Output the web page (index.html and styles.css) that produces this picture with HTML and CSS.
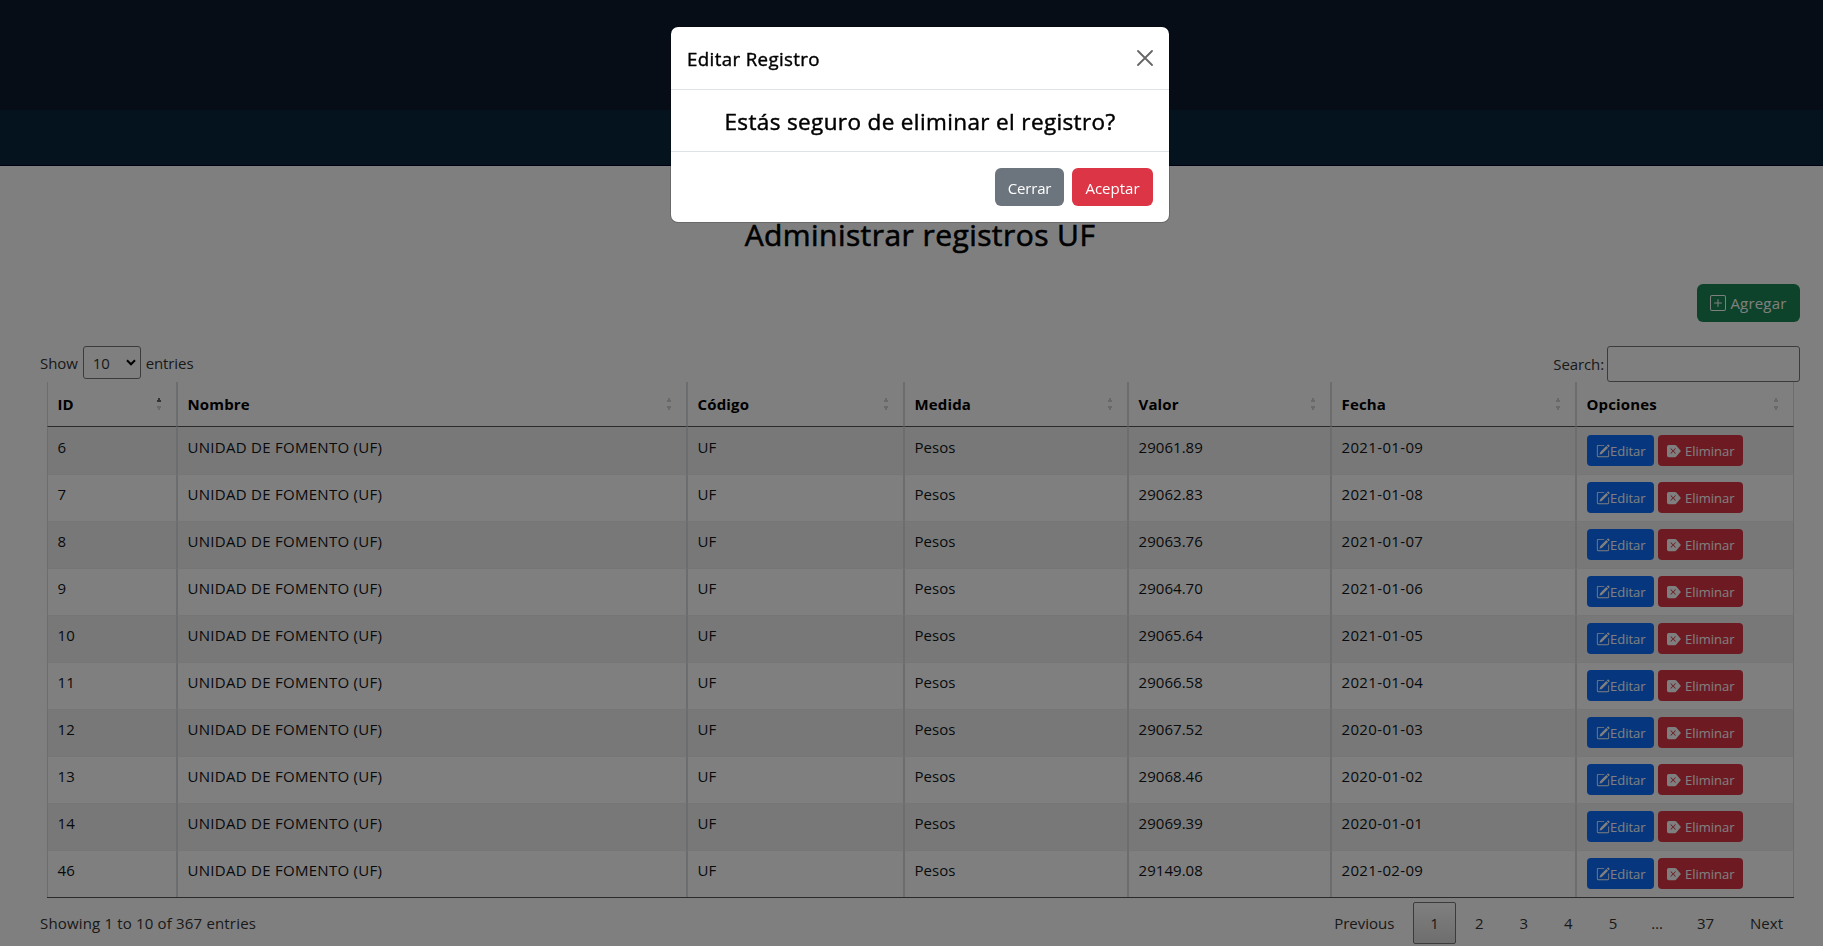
FILE: index.html
```
<!DOCTYPE html>
<html lang="es">
<head>
<meta charset="utf-8">
<title>Administrar registros UF</title>
<link rel="stylesheet" href="styles.css">
</head>
<body>
<svg class="sprite" width="0" height="0">
  <symbol id="pencil" viewBox="0 0 16 16"><path d="M15.502 1.94a.5.5 0 0 1 0 .706L14.459 3.69l-2-2L13.502.646a.5.5 0 0 1 .707 0l1.293 1.293zm-1.75 2.456-2-2L4.939 9.21a.5.5 0 0 0-.121.196l-.805 2.414a.25.25 0 0 0 .316.316l2.414-.805a.5.5 0 0 0 .196-.12l6.813-6.814z"/><path fill-rule="evenodd" d="M1 13.5A1.5 1.5 0 0 0 2.500 15h11a1.500 1.500 0 0 0 1.500-1.500v-6a.5.5 0 0 0-1 0v6a.5.5 0 0 1-.5.5h-11a.5.5 0 0 1-.5-.5v-11a.5.5 0 0 1 .5-.5H9a.5.5 0 0 0 0-1H2.500A1.500 1.500 0 0 0 1 2.500v11z"/></symbol>
  <symbol id="erase" viewBox="0 0 16 16"><path fill-rule="evenodd" d="M0 3a2 2 0 0 1 2-2h7.080a2 2 0 0 1 1.519.698l4.843 5.651a1 1 0 0 1 0 1.302L10.600 14.300a2 2 0 0 1-1.520.7H2a2 2 0 0 1-2-2V3zm9.854 2.854a.5.5 0 0 0-.708-.708L7 7.293 4.854 5.146a.5.5 0 1 0-.708.708L6.293 8l-2.147 2.146a.5.5 0 0 0 .708.708L7 8.707l2.146 2.147a.5.5 0 0 0 .708-.708L7.707 8l2.147-2.146z"/></symbol>
</svg>
<header class="topbar"></header>
<nav class="subbar"></nav>
<main class="page">
  <h1 class="page-title">Administrar registros UF</h1>
  <div class="actions">
    <button class="btn btn-add"><svg width="16" height="16" viewBox="0 0 16 16" fill="currentColor"><path d="M14 1a1 1 0 0 1 1 1v12a1 1 0 0 1-1 1H2a1 1 0 0 1-1-1V2a1 1 0 0 1 1-1h12zM2 0a2 2 0 0 0-2 2v12a2 2 0 0 0 2 2h12a2 2 0 0 0 2-2V2a2 2 0 0 0-2-2H2z"/><path d="M8 4a.5.5 0 0 1 .5.5v3h3a.5.5 0 0 1 0 1h-3v3a.5.5 0 0 1-1 0v-3h-3a.5.5 0 0 1 0-1h3v-3A.5.5 0 0 1 8 4z"/></svg><span>Agregar</span></button>
  </div>
  <div class="controls">
    <label class="length"><span>Show</span><span class="select">10<svg width="10" height="7" viewBox="0 0 10 7"><path d="M1 1.300l4 4 4-4" fill="none" stroke="#000" stroke-width="2"/></svg></span><span>entries</span></label>
    <label class="search"><span>Search:</span><input type="text"></label>
  </div>
  <table class="table">
    <colgroup><col class="c-id"><col class="c-name"><col class="c-code"><col class="c-unit"><col class="c-value"><col class="c-date"><col class="c-opts"></colgroup>
    <thead><tr><th class="asc">ID</th><th>Nombre</th><th>Código</th><th>Medida</th><th>Valor</th><th>Fecha</th><th>Opciones</th></tr></thead>
    <tbody>
      <tr><td>6</td><td class="name">UNIDAD DE FOMENTO (UF)</td><td>UF</td><td>Pesos</td><td>29061.89</td><td class="date">2021-01-09</td><td class="opts"><div><button class="sm edit"><svg><use href="#pencil"/></svg>Editar</button><button class="sm del"><svg><use href="#erase"/></svg><span>Eliminar</span></button></div></td></tr>
      <tr><td>7</td><td class="name">UNIDAD DE FOMENTO (UF)</td><td>UF</td><td>Pesos</td><td>29062.83</td><td class="date">2021-01-08</td><td class="opts"><div><button class="sm edit"><svg><use href="#pencil"/></svg>Editar</button><button class="sm del"><svg><use href="#erase"/></svg><span>Eliminar</span></button></div></td></tr>
      <tr><td>8</td><td class="name">UNIDAD DE FOMENTO (UF)</td><td>UF</td><td>Pesos</td><td>29063.76</td><td class="date">2021-01-07</td><td class="opts"><div><button class="sm edit"><svg><use href="#pencil"/></svg>Editar</button><button class="sm del"><svg><use href="#erase"/></svg><span>Eliminar</span></button></div></td></tr>
      <tr><td>9</td><td class="name">UNIDAD DE FOMENTO (UF)</td><td>UF</td><td>Pesos</td><td>29064.70</td><td class="date">2021-01-06</td><td class="opts"><div><button class="sm edit"><svg><use href="#pencil"/></svg>Editar</button><button class="sm del"><svg><use href="#erase"/></svg><span>Eliminar</span></button></div></td></tr>
      <tr><td>10</td><td class="name">UNIDAD DE FOMENTO (UF)</td><td>UF</td><td>Pesos</td><td>29065.64</td><td class="date">2021-01-05</td><td class="opts"><div><button class="sm edit"><svg><use href="#pencil"/></svg>Editar</button><button class="sm del"><svg><use href="#erase"/></svg><span>Eliminar</span></button></div></td></tr>
      <tr><td>11</td><td class="name">UNIDAD DE FOMENTO (UF)</td><td>UF</td><td>Pesos</td><td>29066.58</td><td class="date">2021-01-04</td><td class="opts"><div><button class="sm edit"><svg><use href="#pencil"/></svg>Editar</button><button class="sm del"><svg><use href="#erase"/></svg><span>Eliminar</span></button></div></td></tr>
      <tr><td>12</td><td class="name">UNIDAD DE FOMENTO (UF)</td><td>UF</td><td>Pesos</td><td>29067.52</td><td class="date">2020-01-03</td><td class="opts"><div><button class="sm edit"><svg><use href="#pencil"/></svg>Editar</button><button class="sm del"><svg><use href="#erase"/></svg><span>Eliminar</span></button></div></td></tr>
      <tr><td>13</td><td class="name">UNIDAD DE FOMENTO (UF)</td><td>UF</td><td>Pesos</td><td>29068.46</td><td class="date">2020-01-02</td><td class="opts"><div><button class="sm edit"><svg><use href="#pencil"/></svg>Editar</button><button class="sm del"><svg><use href="#erase"/></svg><span>Eliminar</span></button></div></td></tr>
      <tr><td>14</td><td class="name">UNIDAD DE FOMENTO (UF)</td><td>UF</td><td>Pesos</td><td>29069.39</td><td class="date">2020-01-01</td><td class="opts"><div><button class="sm edit"><svg><use href="#pencil"/></svg>Editar</button><button class="sm del"><svg><use href="#erase"/></svg><span>Eliminar</span></button></div></td></tr>
      <tr><td>46</td><td class="name">UNIDAD DE FOMENTO (UF)</td><td>UF</td><td>Pesos</td><td>29149.08</td><td class="date">2021-02-09</td><td class="opts"><div><button class="sm edit"><svg><use href="#pencil"/></svg>Editar</button><button class="sm del"><svg><use href="#erase"/></svg><span>Eliminar</span></button></div></td></tr>
    </tbody>
  </table>
  <div class="footer">
    <div class="info">Showing 1 to 10 of 367 entries</div>
    <div class="pager"><a>Previous</a><a class="current">1</a><a>2</a><a>3</a><a>4</a><a>5</a><span class="dots">…</span><a>37</a><a>Next</a></div>
  </div>
</main>
<div class="backdrop">
  <div class="modal">
    <div class="modal-header"><h5>Editar Registro</h5><svg width="16" height="16" viewBox="0 0 16 16"><path d="M1 1l14 14M15 1L1 15" stroke="#666" stroke-width="1.800" stroke-linecap="round"/></svg></div>
    <div class="modal-body"><h4>Estás seguro de eliminar el registro?</h4></div>
    <div class="modal-footer"><button class="btn btn-close">Cerrar</button><button class="btn btn-ok">Aceptar</button></div>
  </div>
</div>
</body>
</html>
```
FILE: styles.css
```
* { box-sizing: border-box; }
body {
  margin: 0;
  height: 946px;
  overflow: hidden;
  background: #fff;
  color: #101418;
  font: 15px/24px "Open Sans", "Noto Sans", sans-serif;
}
.sprite { display: none; }
button { font-family: inherit; }
.topbar { height: 110px; background: #0d1a2e; }
.subbar { height: 56px; background: #0a263e; border-bottom: 1px solid #000028; }
.page { padding: 48px 23px 0 40px; }
.page-title {
  margin: 0;
  height: 42px;
  text-align: center;
  color: #000;
  font-size: 30px;
  line-height: 42px;
  font-weight: 500;
  letter-spacing: 0.43px;
  -webkit-text-stroke: 0.6px #000;
}
.actions { display: flex; justify-content: flex-end; margin-top: 28px; }
.btn {
  display: flex;
  align-items: center;
  justify-content: center;
  height: 38px;
  padding: 0;
  border: 0;
  border-radius: 6px;
  color: #fff;
  font-size: 15px;
}
.btn-add { width: 103px; gap: 4px; background: #198754; letter-spacing: 0.2px; }
.controls { display: flex; justify-content: space-between; align-items: flex-start; height: 60px; padding-top: 24px; color: #333; }
.length { display: flex; align-items: center; gap: 5px; height: 33px; letter-spacing: -0.1px; }
.select {
  display: flex;
  align-items: center;
  justify-content: space-between;
  width: 58px;
  height: 33px;
  padding: 0 4px 0 9px;
  border: 1px solid #777;
  border-radius: 3px;
}
.search { display: flex; align-items: center; gap: 3px; height: 36px; letter-spacing: -0.1px; }
.search input { width: 193px; height: 36px; border: 1px solid #777; border-radius: 3px; background: transparent; }
.table {
  width: 1747px;
  margin-left: 7px;
  table-layout: fixed;
  border-collapse: separate;
  border-spacing: 0;
  border-bottom: 1px solid #555;
}
.c-id { width: 130px; }
.c-name { width: 510px; }
.c-code { width: 217px; }
.c-unit { width: 224px; }
.c-value { width: 203px; }
.c-date { width: 245px; }
.c-opts { width: 218px; }
th, td { border: 0 solid #d6dade; border-width: 0 1px; text-align: left; }
th {
  height: 45px;
  padding: 0 9.500px;
  border-bottom: 1px solid #555;
  color: #000;
  letter-spacing: 0.15px;
  background:
    conic-gradient(from 153deg at 50% 0, #d3d3d3 54deg, transparent 0) right 14px top 15px / 6px 5px no-repeat,
    conic-gradient(from -27deg at 50% 100%, #d3d3d3 54deg, transparent 0) right 14px top 24px / 6px 5px no-repeat;
}
th.asc {
  background:
    conic-gradient(from 153deg at 50% 0, #666 54deg, transparent 0) right 14px top 15px / 6px 5px no-repeat,
    conic-gradient(from -27deg at 50% 100%, #d3d3d3 54deg, transparent 0) right 14px top 24px / 6px 5px no-repeat;
}
td { height: 47px; padding: 7px 9.500px 0; vertical-align: top; border-top: 1px solid #ececec; letter-spacing: 0.05px; }
td.name { letter-spacing: 0.28px; }
td.date { letter-spacing: 0.35px; }
tbody tr:first-child td { border-top-color: #f1f1f1; }
tbody tr:nth-child(odd) td { background: #f1f1f1; }
td.opts { padding: 7px 10px 0; letter-spacing: 0; }
.opts div { display: flex; gap: 4px; }
.sm {
  display: flex;
  align-items: center;
  height: 31px;
  padding: 0 0 0 9px;
  border: 0;
  border-radius: 4px;
  color: #fff;
  font-size: 13px;
}
.sm svg { width: 14px; height: 14px; fill: currentColor; }
.edit { width: 67px; background: #0d6efd; }
.del { width: 85px; gap: 4px; background: #dc3545; }
.footer { display: flex; justify-content: space-between; color: #333; }
.info { padding-top: 13px; letter-spacing: 0.17px; }
.pager { display: flex; gap: 2px; padding-top: 4px; }
.pager a { height: 42px; padding: 8px 16px; border: 1px solid transparent; border-radius: 2px; }
.pager .current { border-color: #777; background: linear-gradient(#fff, #dcdcdc); }
.dots { padding: 9px 15px 0; }
.backdrop { position: fixed; inset: 0; background: rgba(0, 0, 0, 0.5); }
.modal { width: 500px; margin: 26px 0 0 670px; border: 1px solid rgba(0, 0, 0, 0.175); border-radius: 8px; background: #fff; background-clip: padding-box; color: #000; }
.modal-header { display: flex; justify-content: space-between; align-items: center; height: 63px; padding: 0 16px; border-bottom: 1px solid #dee2e6; }
.modal h5 { margin: 2px 0 0; font-size: 18.700px; font-weight: 500; letter-spacing: 0.37px; -webkit-text-stroke: 0.4px #000; }
.modal-body { height: 61px; padding: 16px; text-align: center; }
.modal h4 { margin: 0; font-size: 22.500px; line-height: 31px; font-weight: 500; letter-spacing: 0.37px; -webkit-text-stroke: 0.45px #000; }
.modal-footer { display: flex; justify-content: flex-end; gap: 8px; height: 71px; padding: 16px 16px 0; border-top: 1px solid #dee2e6; }
.modal-footer .btn { padding-top: 1px; }
.btn-close { width: 69px; background: #6c757d; letter-spacing: -0.2px; }
.btn-ok { width: 81px; background: #dc3545; }
```
